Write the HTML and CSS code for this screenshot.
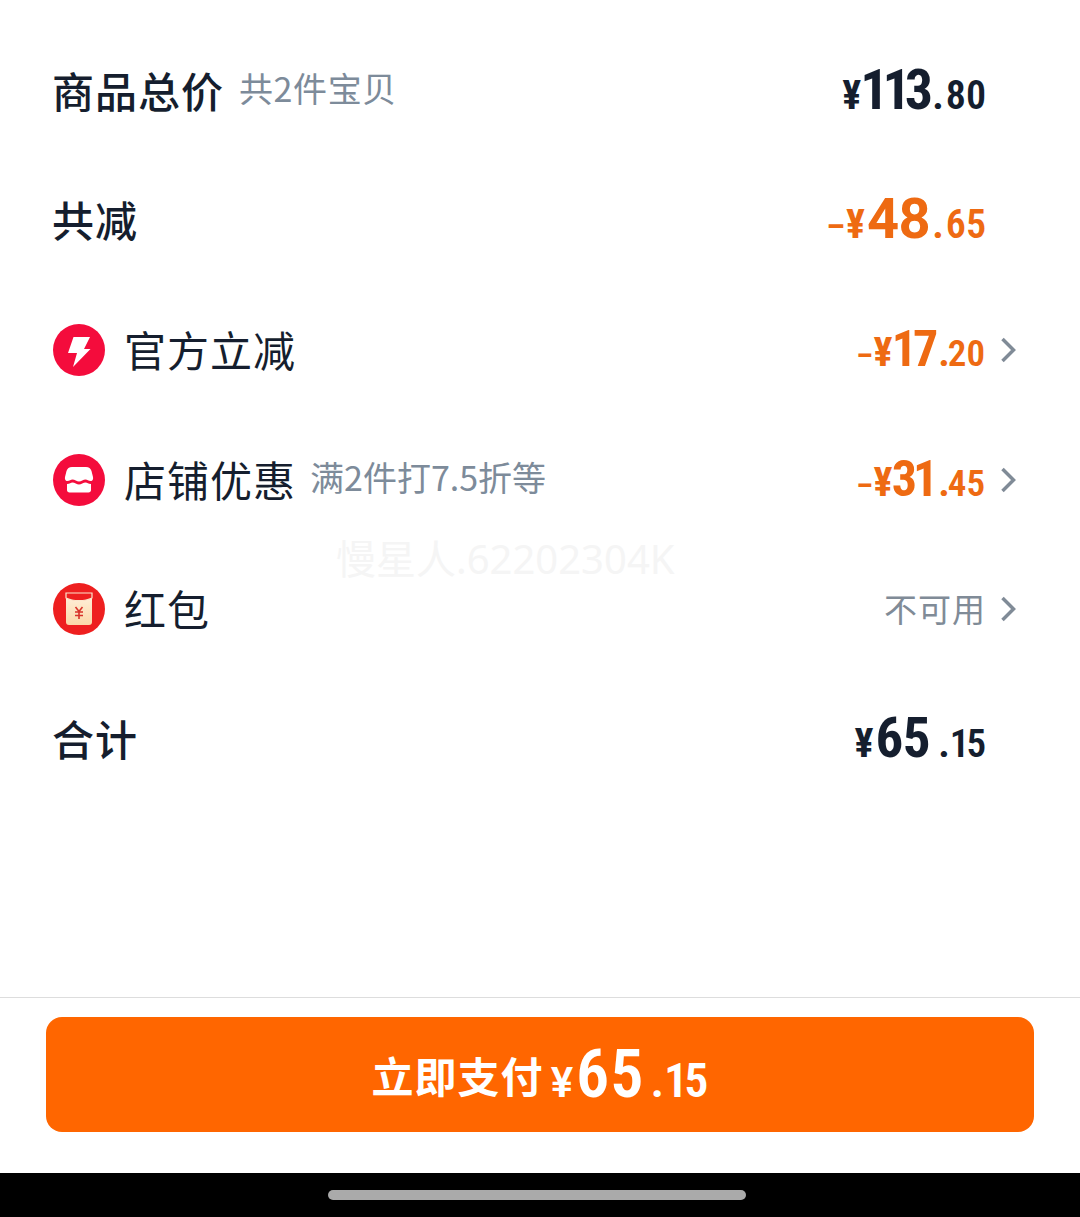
FILE: index.html
```html
<!DOCTYPE html>
<html lang="zh-CN">
<head>
    <meta charset="UTF-8">
    <meta name="viewport" content="width=device-width, initial-scale=1.0">
    <title>订单结算</title>
    <link rel="stylesheet" href="styles.css">
</head>
<body>
    <div class="page">
        <div class="list">
            <div class="row">
                <div class="left">
                    <span class="label medium">商品总价</span>
                    <span class="note">共2件宝贝</span>
                </div>
                <div class="price dark">
                    <span class="yen">¥</span><span class="big ones">113</span><span class="dot">.</span><span class="small">80</span>
                </div>
            </div>
            <div class="row">
                <div class="left">
                    <span class="label medium">共减</span>
                </div>
                <div class="price orange">
                    <span class="minus">–</span><span class="yen">¥</span><span class="big">48</span><span class="dot">.</span><span class="small">65</span>
                </div>
            </div>
            <div class="row">
                <div class="left">
                    <svg class="icon" viewBox="0 0 52 52">
                        <circle cx="26" cy="26" r="26" fill="#f40c3c"/>
                        <path d="M20.5 13H37l-6 12h6.500L20 43l4-14h-9z" fill="#fff"/>
                    </svg>
                    <span class="label">官方立减</span>
                </div>
                <div class="right">
                    <div class="price orange sub">
                        <span class="minus">–</span><span class="yen">¥</span><span class="big ones">17</span><span class="dot">.</span><span class="small">20</span>
                    </div>
                    <svg class="arrow" viewBox="0 0 16 26"><path d="M2.5 2l11 11-11 11"/></svg>
                </div>
            </div>
            <div class="row">
                <div class="left">
                    <svg class="icon" viewBox="0 0 52 52">
                        <circle cx="26" cy="26" r="26" fill="#f40c3c"/>
                        <!-- awning and counter of the shop, split by a wavy gap -->
                        <path d="M19 13H33C36 13 37.5 14.5 38.5 17L40 23C40.5 25 39.5 27 38 27C35 27 34.5 25.5 32.5 25.5C30.5 25.5 28 27.5 26 27.5C24 27.5 21.5 25.5 19.5 25.5C17.5 25.5 17 27 14 27C12.500 27 11.500 25 12 23L13.5 17C14.5 14.5 16 13 19 13Z" fill="#fff"/>
                        <path d="M14 30C17 30 17.5 28.5 19.5 28.5C21.5 28.5 24 30.5 26 30.5C28 30.5 30.5 28.5 32.5 28.5C34.5 28.5 35 30 38 30V36C38 37.5 37 38.5 35.5 38.5H16.5C15 38.5 14 37.5 14 36Z" fill="#fff"/>
                    </svg>
                    <span class="label">店铺优惠</span>
                    <span class="note tight">满2件打7.5折等</span>
                </div>
                <div class="right">
                    <div class="price orange sub">
                        <span class="minus">–</span><span class="yen">¥</span><span class="big ones">31</span><span class="dot">.</span><span class="small">45</span>
                    </div>
                    <svg class="arrow" viewBox="0 0 16 26"><path d="M2.5 2l11 11-11 11"/></svg>
                </div>
            </div>
            <div class="row">
                <div class="left">
                    <svg class="icon" viewBox="0 0 52 52">
                        <defs>
                            <linearGradient id="packet" x1="0" y1="0" x2="0" y2="1">
                                <stop offset="0" stop-color="#fff1de"/>
                                <stop offset="1" stop-color="#fbd8a8"/>
                            </linearGradient>
                        </defs>
                        <circle cx="26" cy="26" r="26" fill="#ee1f1f"/>
                        <rect x="13" y="10" width="26" height="32" rx="3" fill="url(#packet)"/>
                        <path d="M13 10h26v5c-7 3.5-19 3.5-26 0z" fill="#ee1f1f" stroke="#fbe6cc" stroke-width="1.2"/>
                        <path d="M22.5 24l3.5 4.5 3.5-4.5M22 29h8M22 32.5h8M26 28.5v7.5" fill="none" stroke="#d8332a" stroke-width="1.6"/>
                    </svg>
                    <span class="label">红包</span>
                </div>
                <div class="right">
                    <span class="none">不可用</span>
                    <svg class="arrow" viewBox="0 0 16 26"><path d="M2.5 2l11 11-11 11"/></svg>
                </div>
            </div>
            <div class="row">
                <div class="left">
                    <span class="label medium">合计</span>
                </div>
                <div class="price dark total">
                    <span class="yen">¥</span><span class="big">65</span><span class="dot">.</span><span class="small">15</span>
                </div>
            </div>
            <div class="mark">慢星人.62202304K</div>
        </div>
        <div class="footer">
            <button class="pay">
                <span class="pay-text">立即支付</span>
                <span class="pay-amount">
                    <span class="pay-yen">¥</span><span class="pay-big">65</span><span class="pay-dot">.</span><span class="pay-small">15</span>
                </span>
            </button>
        </div>
        <div class="navbar"><div class="handle"></div></div>
    </div>
</body>
</html>
```

FILE: styles.css
```css
body {
    margin: 0;
    background-color: #fff;
    font-family: "Noto Sans CJK SC", "Noto Sans", sans-serif;
    color: #151e2e;
}
.page {
    display: flex;
    flex-direction: column;
    height: 1217px;
    overflow: hidden;
}
.list {
    position: relative;
    flex: 1;
    padding-top: 26px;
}
.row {
    display: flex;
    justify-content: space-between;
    align-items: center;
    height: 129.6px;
    padding: 0 64px 0 53px;
}
.left {
    display: flex;
    align-items: center;
}
.right {
    display: flex;
    align-items: center;
}
.label {
    font-size: 42px;
    line-height: 60px;
    letter-spacing: 1px;
    margin-top: -2px;
    margin-left: -1px;
}
.medium {
    font-weight: 500;
}
.note {
    font-size: 34px;
    line-height: 60px;
    letter-spacing: .6px;
    color: #7d8b9a;
    margin-left: 15px;
    margin-top: -6px;
}
.tight {
    letter-spacing: 0;
    margin-left: 14px;
}
.icon {
    width: 52px;
    height: 52px;
    margin-right: 20px;
}
.price {
    display: flex;
    align-items: baseline;
    margin-right: 30px;
    padding-top: 5px;
    font-family: "Roboto", sans-serif;
    font-weight: 700;
    line-height: 60px;
}
.sub {
    margin-right: 0;
}
.dark {
    color: #151e2e;
}
.orange {
    color: #ee6a12;
}
.minus {
    font-size: 34px;
    margin-right: 1px;
    font-stretch: 85%;
}
.sub .minus {
    font-size: 30px;
}
.yen {
    font-size: 40px;
    margin-right: 2px;
    font-stretch: 85%;
}
.big {
    font-size: 56px;
    letter-spacing: -.5px;
}
.big.ones {
    font-stretch: 85%;
    letter-spacing: -6px;
    margin-left: -3px;
    margin-right: 3px;
}
.sub .big {
    font-size: 50px;
}
.sub .big.ones {
    letter-spacing: -4px;
    margin-right: 2px;
}
.dot {
    font-size: 40px;
    margin: 0 2px;
}
.small {
    font-size: 40px;
    font-weight: 600;
    font-stretch: 87%;
}
.sub .small {
    font-size: 37px;
    font-stretch: 85%;
}
.sub .dot {
    margin-right: -2px;
}
.total .big {
    font-size: 55px;
    font-stretch: 85%;
}
.total .dot {
    margin-left: 8px;
    margin-right: 0;
}
.total .small {
    font-size: 39px;
    font-stretch: 85%;
    letter-spacing: -3px;
    margin-right: 3px;
}
.arrow {
    width: 16px;
    height: 26px;
    margin-left: 15px;
    fill: none;
    stroke: #808b97;
    stroke-width: 3.5;
}
.none {
    font-size: 33px;
    line-height: 60px;
    color: #808b97;
    letter-spacing: 1px;
    margin-top: -3px;
    margin-right: -1px;
}
.mark {
    position: absolute;
    top: 530px;
    left: 336px;
    font-family: "Noto Sans", "Noto Sans CJK SC", sans-serif;
    font-size: 40px;
    line-height: 58px;
    color: #f5f5f5;
}
.footer {
    border-top: 1px solid #ddd;
    padding: 19px 46px 41px;
}
.pay {
    display: flex;
    justify-content: center;
    align-items: center;
    width: 100%;
    height: 115px;
    padding: 0;
    border: none;
    border-radius: 16px;
    background-color: #ff6600;
    color: #fff;
}
.pay-text {
    font-family: "Noto Sans CJK SC", sans-serif;
    font-size: 42px;
    font-weight: 700;
    line-height: 60px;
    letter-spacing: 1px;
    margin-right: 7px;
}
.pay-amount {
    display: flex;
    align-items: baseline;
    padding-top: 8px;
    font-family: "Roboto", sans-serif;
    font-weight: 600;
    font-stretch: 87%;
    line-height: 60px;
}
.pay-yen {
    font-size: 42px;
    margin-right: 3px;
    font-stretch: 100%;
}
.pay-big {
    font-size: 66px;
    letter-spacing: 1px;
}
.pay-dot {
    font-size: 48px;
    margin: 0 0 0 6px;
}
.pay-small {
    font-size: 48px;
    letter-spacing: -4px;
    margin-right: 4px;
    font-stretch: 85%;
}
.navbar {
    display: flex;
    justify-content: center;
    align-items: center;
    height: 44px;
    padding-right: 6px;
    box-sizing: border-box;
    background-color: #000;
}
.handle {
    width: 418px;
    height: 10px;
    border-radius: 5px;
    background-color: #aaa;
}
```
